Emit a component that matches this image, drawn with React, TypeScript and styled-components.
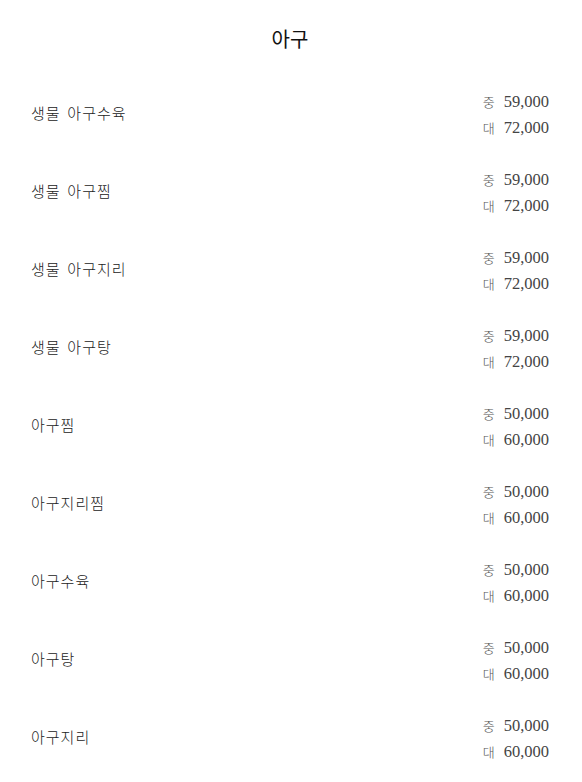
import React from "react";
import styled, { createGlobalStyle } from "styled-components";

const Global = createGlobalStyle`
  body { margin: 0; background: #fff; }
  * { box-sizing: border-box; }
`;

const Page = styled.div`
  width: 582px;
  padding: 0 33px 0 31px;
  font-family: "Liberation Serif", "Noto Sans CJK KR", serif;
  color: #222;
`;

const Title = styled.h1`
  margin: 0;
  padding-top: 25px;
  height: 76px;
  line-height: 30px;
  font-size: 20px;
  font-weight: 400;
  text-align: center;
  color: #111;
`;

const Row = styled.div`
  display: flex;
  justify-content: space-between;
  align-items: center;
  height: 78px;
`;

const Name = styled.div`
  font-size: 15px;
  font-weight: 300;
  letter-spacing: 1px;
  word-spacing: 2px;
  color: #222;
  padding-bottom: 5px;
`;

const Prices = styled.div`
  display: flex;
  flex-direction: column;
  align-items: flex-end;
`;

const PriceLine = styled.div`
  line-height: 25px;
  font-size: 16.5px;
  color: #444;
  display: flex;
  align-items: baseline;
  gap: 9px;
`;

const Size = styled.span`
  font-size: 13px;
  font-weight: 300;
  color: #555;
`;

type Item = { name: string; mid: string; large: string };

const items: Item[] = [
  { name: "생물 아구수육", mid: "59,000", large: "72,000" },
  { name: "생물 아구찜", mid: "59,000", large: "72,000" },
  { name: "생물 아구지리", mid: "59,000", large: "72,000" },
  { name: "생물 아구탕", mid: "59,000", large: "72,000" },
  { name: "아구찜", mid: "50,000", large: "60,000" },
  { name: "아구지리찜", mid: "50,000", large: "60,000" },
  { name: "아구수육", mid: "50,000", large: "60,000" },
  { name: "아구탕", mid: "50,000", large: "60,000" },
  { name: "아구지리", mid: "50,000", large: "60,000" },
];

export default function App() {
  return (
    <Page>
      <Global />
      <Title>아구</Title>
      {items.map((it) => (
        <Row key={it.name}>
          <Name>{it.name}</Name>
          <Prices>
            <PriceLine>
              <Size>중</Size>
              {it.mid}
            </PriceLine>
            <PriceLine>
              <Size>대</Size>
              {it.large}
            </PriceLine>
          </Prices>
        </Row>
      ))}
    </Page>
  );
}
